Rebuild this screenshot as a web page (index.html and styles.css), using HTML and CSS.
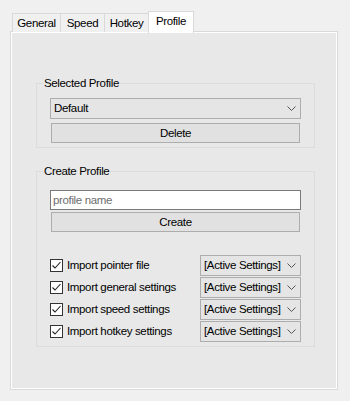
FILE: index.html
```html
<!DOCTYPE html>
<html lang="en">
  <head>
    <meta charset="UTF-8" />
    <meta name="viewport" content="width=device-width, initial-scale=1.0" />
    <title>Profile</title>
    <link rel="stylesheet" href="styles.css">
  </head>

  <body>
    <div class="window">
      <div class="tabs">
        <div class="tab">General</div>
        <div class="tab">Speed</div>
        <div class="tab">Hotkey</div>
        <div class="tab active">Profile</div>
      </div>

      <div class="page">
        <fieldset class="group group-selected">
          <legend>Selected Profile</legend>
          <div class="combo">
            <span>Default</span>
            <svg class="chev" width="9" height="5" viewBox="0 0 9 5"><polyline points="0.5,0.5 4.5,4.5 8.5,0.5" /></svg>
          </div>
          <div class="button">Delete</div>
        </fieldset>

        <fieldset class="group group-create">
          <legend>Create Profile</legend>
          <input class="textbox" type="text" placeholder="profile name">
          <div class="button">Create</div>

          <div class="imports">
            <div class="row">
              <label class="check"><span class="box"><svg width="11" height="11" viewBox="0 0 11 11"><polyline points="1.5,5.5 4,8 9.5,2" /></svg></span>Import pointer file</label>
              <div class="combo small"><span>[Active Settings]</span><svg class="chev" width="9" height="5" viewBox="0 0 9 5"><polyline points="0.5,0.5 4.5,4.5 8.5,0.5" /></svg></div>
            </div>
            <div class="row">
              <label class="check"><span class="box"><svg width="11" height="11" viewBox="0 0 11 11"><polyline points="1.5,5.5 4,8 9.5,2" /></svg></span>Import general settings</label>
              <div class="combo small"><span>[Active Settings]</span><svg class="chev" width="9" height="5" viewBox="0 0 9 5"><polyline points="0.5,0.5 4.5,4.5 8.5,0.5" /></svg></div>
            </div>
            <div class="row">
              <label class="check"><span class="box"><svg width="11" height="11" viewBox="0 0 11 11"><polyline points="1.5,5.5 4,8 9.5,2" /></svg></span>Import speed settings</label>
              <div class="combo small"><span>[Active Settings]</span><svg class="chev" width="9" height="5" viewBox="0 0 9 5"><polyline points="0.5,0.5 4.5,4.5 8.5,0.5" /></svg></div>
            </div>
            <div class="row">
              <label class="check"><span class="box"><svg width="11" height="11" viewBox="0 0 11 11"><polyline points="1.5,5.5 4,8 9.5,2" /></svg></span>Import hotkey settings</label>
              <div class="combo small"><span>[Active Settings]</span><svg class="chev" width="9" height="5" viewBox="0 0 9 5"><polyline points="0.5,0.5 4.5,4.5 8.5,0.5" /></svg></div>
            </div>
          </div>
        </fieldset>
      </div>
    </div>
  </body>
</html>
```

FILE: styles.css
```css
* {
  box-sizing: border-box;
}
body {
  margin: 0;
  background: #f0f0f0;
  font-family: "Liberation Sans", Arial, sans-serif;
  font-size: 11.5px;
  letter-spacing: -0.35px;
  color: #000;
  white-space: nowrap;
}
.window {
  width: 350px;
  height: 401px;
  padding-top: 11px;
}
.tabs {
  display: flex;
  align-items: flex-end;
  height: 21px;
  margin-left: 12px;
  position: relative;
  z-index: 1;
}
.tab {
  flex-shrink: 0;
  height: 19px;
  padding-top: 2px;
  border: 1px solid #d9d9d9;
  border-bottom: none;
  border-right: none;
  background: #f0f0f0;
  line-height: 15px;
  text-align: center;
}
.tab:nth-child(1) { width: 48px; }
.tab:nth-child(2) { width: 44px; }
.tab:nth-child(3) { width: 44px; }
.tab.active {
  width: 46px;
  height: 22px;
  margin-bottom: -1px;
  padding-top: 2px;
  background: #fff;
  border-right: 1px solid #d9d9d9;
}
.page {
  width: 328px;
  height: 359px;
  margin-left: 10px;
  margin-top: -1px;
  border: 1px solid #d9d9d9;
  box-shadow: inset 0 0 0 1px #fff;
  background: #e8e8e8;
  padding: 43px 22px 0 25px;
}
.group {
  margin: 0;
  padding: 7px 13px 4px 13px;
  border: 1px solid #dcdcdc;
  display: flex;
  flex-direction: column;
  min-width: 0;
}
.group legend {
  margin-left: -7px;
  padding: 0 1px;
  line-height: 16px;
}
.group-create {
  margin-top: 15px;
  padding-top: 11px;
  padding-bottom: 4px;
}
.combo {
  height: 21px;
  border: 1px solid #adadad;
  background: #e5e5e5;
  display: flex;
  align-items: center;
  justify-content: space-between;
  padding: 0 4px 1px 3px;
}
.chev {
  flex-shrink: 0;
}
.chev polyline {
  fill: none;
  stroke: #555;
  stroke-width: 1;
}
.button {
  height: 20px;
  margin: 4px 1px 0 1px;
  border: 1px solid #adadad;
  background: #e1e1e1;
  text-align: center;
  line-height: 18px;
}
.textbox {
  height: 20px;
  border: 1px solid #7a7a7a;
  background: #fff;
  font: inherit;
  letter-spacing: inherit;
  padding: 0 2px 1px 2px;
  margin: 0;
  outline: none;
}
.textbox::placeholder {
  color: #6d6d6d;
}
.group-create .button {
  margin-top: 2px;
}
.imports {
  margin-top: 23px;
  display: flex;
  flex-direction: column;
  gap: 1px;
}
.row {
  display: flex;
  align-items: center;
  justify-content: space-between;
}
.check {
  display: flex;
  align-items: center;
  gap: 4px;
  padding-bottom: 1px;
}
.box {
  width: 13px;
  height: 13px;
  border: 1px solid #333;
  background: #fff;
  display: flex;
}
.box polyline {
  fill: none;
  stroke: #222;
  stroke-width: 1.1;
}
.combo.small {
  width: 101px;
  padding-left: 3px;
}
```
